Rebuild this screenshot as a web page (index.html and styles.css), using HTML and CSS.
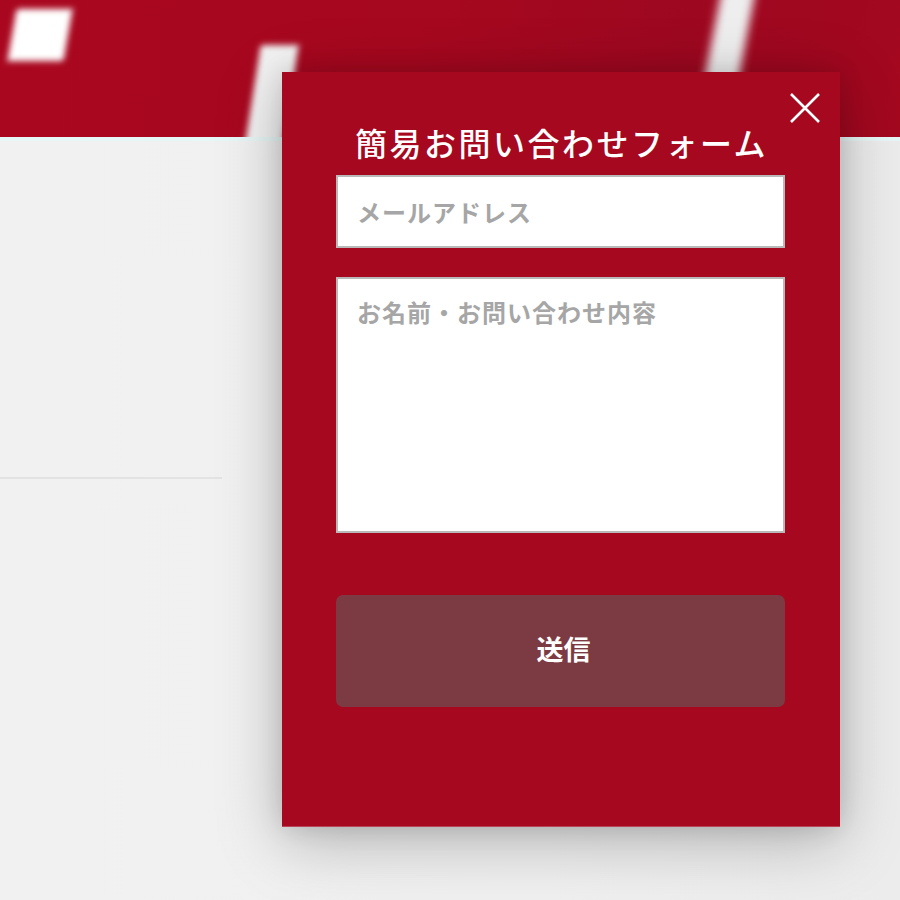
FILE: index.html
```html
<!DOCTYPE html>
<html lang="ja">
<head>
<meta charset="utf-8">
<title>簡易お問い合わせフォーム</title>
<link rel="stylesheet" href="styles.css">
</head>
<body>
<header class="hero">
  <div class="shape shape-a"></div>
  <div class="shape shape-b"></div>
  <div class="shape shape-c"></div>
</header>
<main class="page">
  <div class="rule"></div>
</main>
<section class="modal">
  <button class="close" type="button" aria-label="閉じる">
    <svg viewBox="0 0 30 30" width="30" height="30"><path d="M1 1 L29 29 M29 1 L1 29" stroke="#fff" stroke-width="2.6" fill="none"/></svg>
  </button>
  <h2 class="title">簡易お問い合わせフォーム</h2>
  <form class="form">
    <input class="field" type="email" placeholder="メールアドレス">
    <textarea class="field area" placeholder="お名前・お問い合わせ内容"></textarea>
    <button class="send" type="button">送信</button>
  </form>
</section>
</body>
</html>
```
FILE: styles.css
```css
html, body {
  margin: 0;
  padding: 0;
}
html {
  overflow: hidden;
}
body {
  width: 900px;
  height: 900px;
  overflow: hidden;
  background: #f0f0f0;
  font-family: "Noto Sans CJK JP", "Noto Sans", sans-serif;
  position: relative;
}
.hero {
  position: relative;
  height: 137px;
  background: linear-gradient(100deg, #a9071f 0%, #a6081f 45%, #9d0820 75%, #a3081f 100%);
  border-bottom: 4px solid #e6f5f5;
  overflow: hidden;
}
.shape {
  position: absolute;
  background: #fff;
  filter: blur(3px);
}
.shape-a {
  left: 12px;
  top: 9px;
  width: 56px;
  height: 52px;
  transform: skewX(-10deg);
}
.shape-b {
  left: 252px;
  top: 45px;
  width: 38px;
  height: 110px;
  transform: skewX(-9deg);
  background: #f2f2f2;
}
.shape-c {
  left: 712px;
  top: -20px;
  width: 34px;
  height: 120px;
  transform: skewX(-11deg);
  background: #eeeeee;
  filter: blur(5px);
}
.page {
  box-sizing: border-box;
  height: 759px;
  padding-top: 336px;
  background: linear-gradient(90deg, #f1f1f1 0%, #f0f0f0 60%, #ececec 100%);
}
.rule {
  width: 222px;
  height: 2px;
  background: #e3e3e3;
}
.modal {
  position: absolute;
  left: 282px;
  top: 72px;
  width: 558px;
  height: 755px;
  box-sizing: border-box;
  padding: 50px 55px 0 54px;
  background: #a5081f;
  border-bottom: 1px solid #b8455a;
  box-shadow: 0 14px 60px rgba(0, 0, 0, 0.26), 0 0 24px rgba(0, 0, 0, 0.12);
}
.close {
  position: absolute;
  top: 21px;
  right: 20px;
  width: 30px;
  height: 30px;
  padding: 0;
  border: 0;
  background: transparent;
  cursor: pointer;
}
.close svg {
  display: block;
}
.title {
  margin: 0 0 13px;
  padding-left: 2px;
  color: #fff;
  font-size: 32px;
  line-height: 40px;
  font-weight: 500;
  letter-spacing: 2.5px;
  text-align: center;
}
.form {
  display: flex;
  flex-direction: column;
}
.field {
  box-sizing: border-box;
  width: 100%;
  margin: 0;
  border: 2px solid #b9b9b9;
  background: #fff;
  font-family: "Noto Sans CJK JP", "Noto Sans", sans-serif;
  font-size: 24px;
  font-weight: 700;
  letter-spacing: 1px;
  color: #333;
  padding: 0 0 0 19px;
  outline: none;
}
.field::placeholder {
  color: #a6a6a6;
}
input.field {
  height: 73px;
  margin-bottom: 29px;
}
.area {
  height: 256px;
  padding-top: 17px;
  resize: none;
  line-height: 32px;
}
.send {
  margin-top: 62px;
  height: 112px;
  padding: 0 0 5px 6px;
  border: 0;
  border-radius: 7px;
  background: #7c3a43;
  color: #fff;
  font-family: "Noto Sans CJK JP", "Noto Sans", sans-serif;
  font-size: 27px;
  font-weight: 700;
  cursor: pointer;
}
```
